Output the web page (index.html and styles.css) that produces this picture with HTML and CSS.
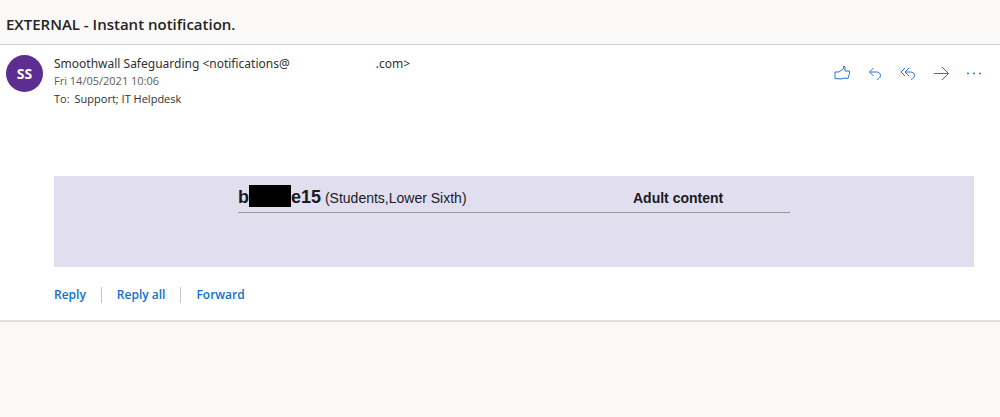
FILE: index.html
```html
<!DOCTYPE html>
<html lang="en">
<head>
  <meta charset="UTF-8">
  <title>EXTERNAL - Instant notification.</title>
  <link rel="stylesheet" href="styles.css">
</head>
<body>

<header class="subject">
  <h1>EXTERNAL - Instant notification.</h1>
</header>

<main class="message">
  <div class="avatar">SS</div>

  <div class="content">
    <div class="top">
      <div class="meta">
        <div class="sender">Smoothwall Safeguarding &lt;notifications@<span class="blank"></span>.com&gt;</div>
        <div class="date">Fri 14/05/2021 10:06</div>
        <div class="to"><span class="label">To:</span>Support; IT Helpdesk</div>
      </div>

      <div class="actions">
        <button aria-label="Like">
          <svg viewBox="0 0 18 18"><path d="M2 8H6L10.500 4.500V2.500H12V7H16.500V9.500L15 14.500L11 14L8 15L2 14.500Z"/></svg>
        </button>
        <button aria-label="Reply">
          <svg viewBox="0 0 18 18"><path d="M7.500 4L3.500 8L7.500 12M3.500 8H10.500C13 8 14.500 9.500 14.500 11.500C14.500 13.500 13.200 14.500 11 15.500"/></svg>
        </button>
        <button aria-label="Reply all">
          <svg viewBox="0 0 18 18"><path d="M6 4L2 8L6 12M10 4L6 8L10 12M6 8H11.500C14 8 15.500 9.500 15.500 11.500C15.500 13.500 14.200 14.500 12 15.500"/></svg>
        </button>
        <button aria-label="Forward">
          <svg viewBox="0 0 18 18"><path d="M2 9.500H16.500M10 3L16.500 9.500L10 16"/></svg>
        </button>
        <button aria-label="More actions">
          <svg viewBox="0 0 18 18" class="dots"><circle cx="3" cy="9.500" r="1"/><circle cx="9" cy="9.500" r="1"/><circle cx="15" cy="9.500" r="1"/></svg>
        </button>
      </div>
    </div>

    <div class="alert">
      <table>
        <tr>
          <td class="user"><b>b<span class="redacted"></span>e15</b> (Students,Lower Sixth)</td>
          <td class="category">Adult content</td>
        </tr>
      </table>
    </div>

    <div class="replies">
      <button>Reply</button>
      <button>Reply all</button>
      <button>Forward</button>
    </div>
  </div>
</main>

</body>
</html>
```

FILE: styles.css
```css
* {
  box-sizing: border-box;
}

body {
  margin: 0;
  background: #faf9f8;
  color: #323130;
  font-family: "Segoe UI", "Open Sans", sans-serif;
}

button {
  border: none;
  padding: 0;
  background: none;
  font-family: inherit;
  cursor: pointer;
}

.subject {
  padding: 12px 6px 8px;
}

.subject h1 {
  margin: 0;
  font-size: 15px;
  line-height: 24px;
  font-weight: 600;
  color: #252423;
}

.message {
  display: flex;
  gap: 11px;
  padding: 10px 26px 17px 6px;
  background: #fff;
  border-top: 1px solid #d2d0ce;
  border-bottom: 2px solid #e1dfdd;
}

.avatar {
  flex: none;
  width: 37px;
  height: 37px;
  border-radius: 50%;
  background: #5c2e91;
  color: #fff;
  font-size: 14px;
  line-height: 37px;
  font-weight: bold;
  text-align: center;
}

.content {
  flex: 1;
}

.top {
  display: flex;
  justify-content: space-between;
}

.meta {
  font-size: 11px;
  line-height: 18px;
}

.sender {
  font-family: "Segoe UI", "Noto Sans", sans-serif;
  font-size: 12px;
  line-height: 17px;
}

.blank {
  display: inline-block;
  width: 86px;
}

.date {
  color: #605e5c;
}

.label {
  margin-right: 5px;
}

.actions {
  display: flex;
  align-items: flex-start;
  gap: 15px;
  padding-top: 9px;
  margin-right: -9px;
}

.actions svg {
  display: block;
  width: 18px;
  height: 18px;
  fill: none;
  stroke: #2b74cf;
}

.actions .dots {
  fill: #2b74cf;
  stroke: none;
}

.alert {
  margin-top: 68px;
  padding: 9px 0 54px;
  background: #e1dfef;
}

.alert table {
  width: 60%;
  margin: 0 auto;
  border-collapse: collapse;
  table-layout: fixed;
  border-bottom: 1px solid #999;
  color: #1b1a1f;
  font-family: Arial, "Liberation Sans", sans-serif;
  font-size: 14px;
}

.alert td {
  padding: 0 0 4px;
  line-height: 20px;
  vertical-align: baseline;
}

.user b {
  font-size: 18px;
}

.redacted {
  display: inline-block;
  width: 42px;
  height: 22px;
  background: #000;
  vertical-align: -4px;
}

.category {
  width: 157px;
  font-weight: bold;
}

.replies {
  display: flex;
  margin-top: 20px;
}

.replies button {
  padding: 0 15px;
  color: #1270cf;
  font-size: 12px;
  line-height: 16px;
  font-weight: 600;
}

.replies button:first-child {
  padding-left: 0;
}

.replies button + button {
  border-left: 1px solid #c8c6c4;
}
```
